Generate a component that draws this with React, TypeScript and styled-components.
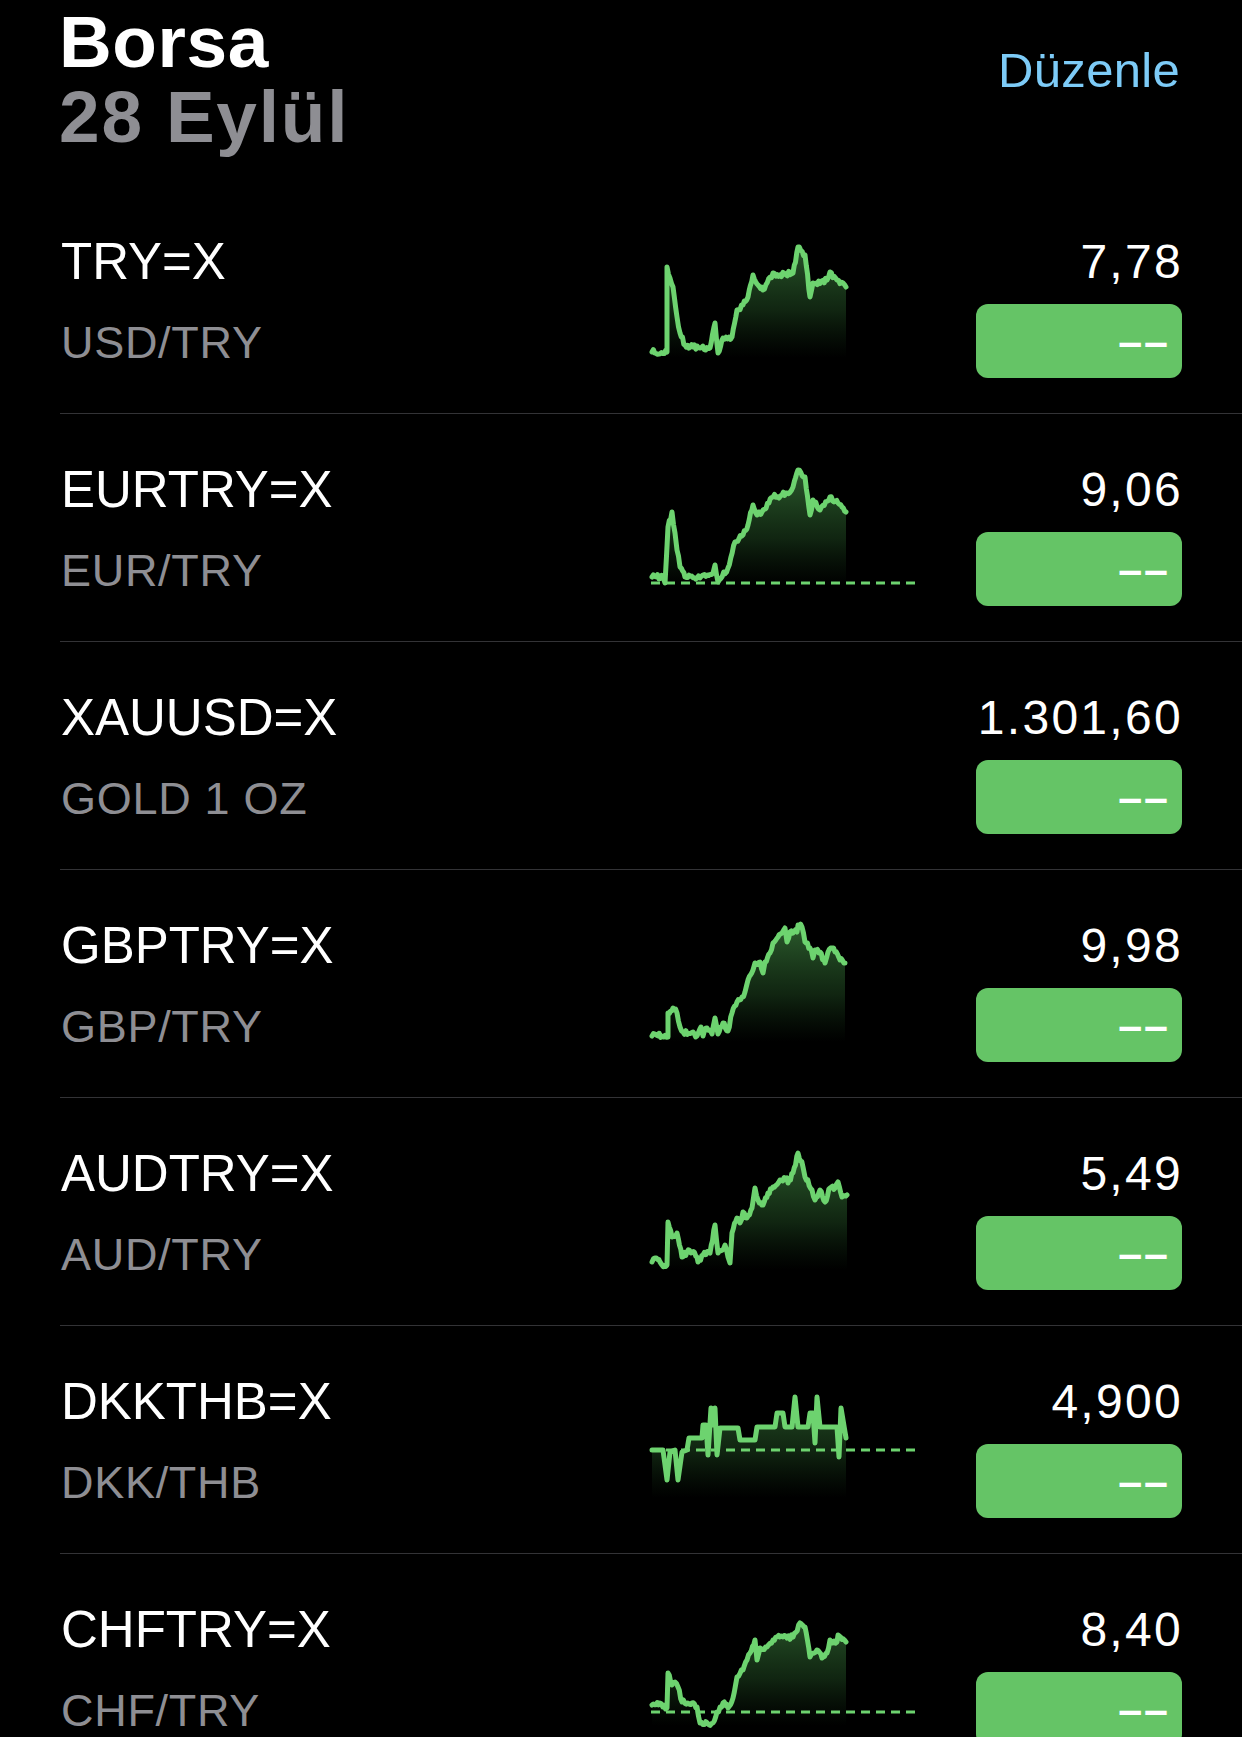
import React from "react";
import styled, { createGlobalStyle } from "styled-components";

type Pt = [number, number];

interface Quote {
  symbol: string;
  name: string;
  price: string;
  points?: Pt[];
  baseline?: number;
  stepped?: boolean;
}

const GlobalStyle = createGlobalStyle`
  html, body {
    margin: 0;
    padding: 0;
    background: #000000;
  }
  body {
    font-family: "Liberation Sans", Arial, sans-serif;
    -webkit-font-smoothing: antialiased;
  }
`;

const Screen = styled.div`
  width: 1242px;
  height: 1737px;
  overflow: hidden;
  background: #000000;
  color: #ffffff;
`;

const Header = styled.header`
  display: flex;
  justify-content: space-between;
  align-items: flex-start;
  padding: 4px 62px 32px 59px;
`;

const TitleBlock = styled.div`
  display: flex;
  flex-direction: column;
`;

const Title = styled.h1<{ $muted?: boolean }>`
  margin: 0;
  font-size: 73px;
  line-height: 75px;
  font-weight: 700;
  letter-spacing: ${(p) => (p.$muted ? "1.8px" : "0.6px")};
  color: ${(p) => (p.$muted ? "#8e8e93" : "#ffffff")};
`;

const EditButton = styled.button`
  margin-top: 38px;
  padding: 0;
  border: none;
  background: none;
  font-family: inherit;
  font-size: 49px;
  line-height: 56px;
  letter-spacing: 0.3px;
  color: #7dcbf7;
  cursor: pointer;
`;

const List = styled.ul`
  list-style: none;
  margin: 0;
  padding: 0;
`;

const Row = styled.li`
  display: grid;
  grid-template-columns: 1fr 265px 206px;
  column-gap: 61px;
  height: 227px;
  margin-left: 60px;
  padding: 0 60px 0 1px;
  border-bottom: 1px solid #333336;
`;

const Info = styled.div`
  display: flex;
  flex-direction: column;
  padding-top: 46px;
`;

const Symbol = styled.div`
  font-size: 51px;
  line-height: 60px;
  color: #ffffff;
  white-space: nowrap;
`;

const Name = styled.div`
  margin-top: 24px;
  font-size: 45px;
  line-height: 54px;
  letter-spacing: 0.7px;
  color: #8e8e93;
  white-space: nowrap;
`;

const ChartCell = styled.div`
  padding-top: 54px;
`;

const QuoteCell = styled.div`
  display: flex;
  flex-direction: column;
  align-items: flex-end;
  padding-top: 48px;
`;

const Price = styled.div`
  font-size: 48px;
  line-height: 56px;
  letter-spacing: 2.3px;
  margin-right: -1px;
  color: #ffffff;
  white-space: nowrap;
`;

const ChangeButton = styled.button`
  display: flex;
  align-items: center;
  justify-content: flex-end;
  width: 206px;
  height: 74px;
  margin-top: 14px;
  padding: 0 12px 0 0;
  border: none;
  border-radius: 12px;
  background: #65c466;
  color: #ffffff;
  font-family: inherit;
  font-size: 43px;
  font-weight: 700;
  line-height: 40px;
  letter-spacing: 2px;
  cursor: pointer;
`;

// seeded jitter so the sparklines look like tick data
const makeRand = (seed: number) => {
  let s = seed;
  return () => {
    s = (s * 16807) % 2147483647;
    return (s - 1) / 2147483646;
  };
};

const densify = (pts: Pt[], seed: number, amp: number): Pt[] => {
  const rand = makeRand(seed);
  const out: Pt[] = [];
  for (let i = 0; i < pts.length - 1; i++) {
    const [ax, ay] = pts[i];
    const [bx, by] = pts[i + 1];
    const n = Math.max(1, Math.round((bx - ax) / 1.4));
    for (let k = 0; k < n; k++) {
      const t = k / n;
      const j = k === 0 ? 0 : (rand() - 0.5) * 2 * amp;
      out.push([ax + (bx - ax) * t, ay + (by - ay) * t + j]);
    }
  }
  out.push(pts[pts.length - 1]);
  return out;
};

const CHART_W = 265;
const CHART_H = 118;
const LINE = "#6dd36f";

const Sparkline: React.FC<{ quote: Quote; seed: number }> = ({ quote, seed }) => {
  if (!quote.points) return null;
  const pts = quote.stepped ? quote.points : densify(quote.points, seed, 2.4);
  const line = pts.map((p, i) => `${i ? "L" : "M"}${p[0].toFixed(1)} ${p[1].toFixed(1)}`).join(" ");
  const first = pts[0];
  const last = pts[pts.length - 1];
  const area = `${line} L${last[0]} ${CHART_H} L${first[0]} ${CHART_H} Z`;
  const gid = `fade-${seed}`;

  return (
    <svg width={CHART_W} height={CHART_H} viewBox={`0 0 ${CHART_W} ${CHART_H}`} overflow="visible">
      <defs>
        <linearGradient id={gid} x1="0" y1="0" x2="0" y2={CHART_H} gradientUnits="userSpaceOnUse">
          <stop offset="0" stopColor="#62cc65" stopOpacity="0.45" />
          <stop offset="0.6" stopColor="#4aa84d" stopOpacity="0.22" />
          <stop offset="1" stopColor="#2f7a32" stopOpacity="0" />
        </linearGradient>
      </defs>
      <path d={area} fill={`url(#${gid})`} />
      {quote.baseline !== undefined && (
        <line
          x1="1"
          x2={CHART_W}
          y1={quote.baseline}
          y2={quote.baseline}
          stroke={LINE}
          strokeWidth="3"
          strokeDasharray="9 6"
        />
      )}
      <path d={line} fill="none" stroke={LINE} strokeWidth="5" strokeLinejoin="round" strokeLinecap="round" />
    </svg>
  );
};

const quotes: Quote[] = [
  {
    symbol: "TRY=X",
    name: "USD/TRY",
    price: "7,78",
    points: [
      [2, 112], [17, 112], [17, 27], [23, 47], [27, 77], [30, 93], [35, 105], [43, 107], [50, 108],
      [60, 108], [65, 83], [68, 113], [73, 98], [82, 97], [87, 70], [93, 65], [98, 57], [103, 35],
      [108, 45], [113, 50], [123, 33], [130, 35], [143, 33], [148, 7], [155, 15], [160, 57],
      [163, 43], [177, 40], [180, 32], [187, 40], [193, 43], [196, 47],
    ],
  },
  {
    symbol: "EURTRY=X",
    name: "EUR/TRY",
    price: "9,06",
    baseline: 115,
    points: [
      [2, 109], [13, 109], [15, 115], [18, 59], [22, 44], [25, 65], [27, 82], [30, 99], [35, 109],
      [47, 110], [53, 107], [63, 105], [65, 97], [68, 114], [78, 100], [85, 74], [93, 67], [98, 57],
      [103, 37], [107, 47], [112, 44], [123, 29], [132, 27], [137, 25], [143, 19], [148, 2],
      [155, 9], [160, 47], [163, 32], [170, 42], [180, 29], [188, 35], [192, 39], [196, 44],
    ],
  },
  { symbol: "XAUUSD=X", name: "GOLD 1 OZ", price: "1.301,60" },
  {
    symbol: "GBPTRY=X",
    name: "GBP/TRY",
    price: "9,98",
    points: [
      [2, 112], [5, 110], [12, 112], [18, 113], [18, 89], [23, 84], [27, 89], [30, 103], [33, 108],
      [43, 108], [47, 112], [51, 103], [53, 112], [57, 104], [62, 110], [65, 94], [68, 110],
      [73, 99], [78, 107], [82, 89], [87, 78], [92, 73], [95, 68], [98, 56], [103, 46], [105, 39],
      [110, 38], [113, 49], [115, 38], [120, 29], [123, 19], [128, 13], [132, 9], [135, 4],
      [137, 18], [140, 8], [147, 8], [148, 1], [152, 3], [155, 18], [160, 24], [163, 34],
      [165, 26], [170, 28], [175, 39], [178, 28], [182, 24], [185, 28], [190, 36], [195, 39],
    ],
  },
  {
    symbol: "AUDTRY=X",
    name: "AUD/TRY",
    price: "5,49",
    points: [
      [2, 110], [5, 106], [10, 110], [12, 113], [17, 113], [18, 70], [22, 85], [27, 81], [32, 105],
      [37, 100], [42, 100], [47, 105], [48, 110], [53, 103], [60, 101], [65, 73], [68, 101],
      [75, 93], [78, 105], [80, 111], [82, 81], [87, 66], [90, 71], [93, 60], [97, 66], [102, 56],
      [105, 36], [108, 48], [113, 53], [118, 41], [123, 35], [130, 28], [137, 26], [138, 31],
      [143, 21], [148, 1], [153, 15], [155, 25], [162, 38], [165, 48], [170, 38], [175, 50],
      [180, 36], [185, 36], [188, 30], [192, 45], [197, 43],
    ],
  },
  {
    symbol: "DKKTHB=X",
    name: "DKK/THB",
    price: "4,900",
    baseline: 70,
    stepped: true,
    points: [
      [2, 70], [13, 70], [17, 100], [20, 72], [25, 70], [28, 100], [32, 72], [37, 70], [39, 58],
      [52, 58], [53, 45], [56, 45], [58, 75], [61, 28], [63, 45], [65, 28], [67, 75], [70, 48],
      [88, 48], [90, 60], [105, 60], [107, 47], [125, 47], [127, 33], [133, 33], [135, 47],
      [142, 47], [145, 17], [148, 47], [158, 47], [160, 33], [163, 33], [165, 63], [167, 17],
      [170, 47], [187, 47], [189, 77], [191, 28], [196, 58],
    ],
  },
  {
    symbol: "CHFTRY=X",
    name: "CHF/TRY",
    price: "8,40",
    baseline: 104,
    points: [
      [2, 97], [10, 95], [17, 100], [18, 65], [22, 77], [25, 74], [28, 79], [32, 94], [42, 95],
      [47, 99], [50, 115], [63, 115], [67, 104], [73, 95], [78, 100], [83, 90], [87, 69], [93, 62],
      [97, 52], [100, 45], [105, 32], [107, 52], [110, 40], [117, 39], [123, 32], [130, 29],
      [137, 30], [143, 29], [150, 15], [155, 19], [160, 49], [167, 42], [172, 50], [177, 45],
      [180, 32], [187, 34], [188, 27], [196, 34],
    ],
  },
];

const App: React.FC = () => {
  return (
    <Screen>
      <GlobalStyle />
      <Header>
        <TitleBlock>
          <Title>Borsa</Title>
          <Title $muted>28 Eylül</Title>
        </TitleBlock>
        <EditButton>Düzenle</EditButton>
      </Header>
      <List>
        {quotes.map((q, index) => (
          <Row key={q.symbol}>
            <Info>
              <Symbol>{q.symbol}</Symbol>
              <Name>{q.name}</Name>
            </Info>
            <ChartCell>
              <Sparkline quote={q} seed={index * 7919 + 13} />
            </ChartCell>
            <QuoteCell>
              <Price>{q.price}</Price>
              <ChangeButton>––</ChangeButton>
            </QuoteCell>
          </Row>
        ))}
      </List>
    </Screen>
  );
};

export default App;
